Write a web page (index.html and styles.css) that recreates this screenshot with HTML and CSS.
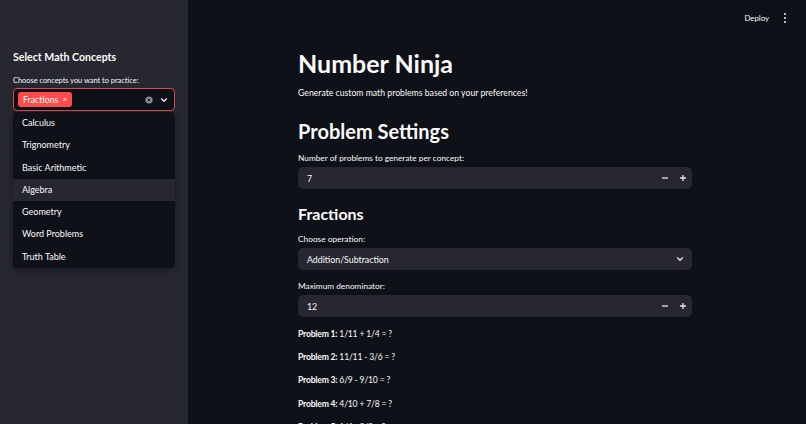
FILE: index.html
```html
<!DOCTYPE html>
<html lang="en">
<head>
<meta charset="utf-8">
<title>Number Ninja</title>
<link rel="stylesheet" href="styles.css">
</head>
<body>
<div class="app">
  <aside class="sidebar">
    <h3 class="side-title">Select Math Concepts</h3>
    <div class="side-label">Choose concepts you want to practice:</div>
    <div class="multiselect">
      <div class="ms-box">
        <span class="tag">Fractions <span class="tag-x">×</span></span>
        <span class="ms-icons">
          <svg class="clear-ico" width="8" height="8" viewBox="0 0 8 8"><circle cx="4" cy="4" r="3.6" fill="#8e9098"/><path d="M2.6 2.6 L5.4 5.4 M5.4 2.6 L2.6 5.4" stroke="#1a1c23" stroke-width="1"/></svg>
          <svg class="chev" width="8" height="6" viewBox="0 0 8 6"><path d="M1.2 1.5 L4 4.3 L6.8 1.5" fill="none" stroke="#e6e6e8" stroke-width="1.4"/></svg>
        </span>
      </div>
      <ul class="menu">
        <li>Calculus</li>
        <li>Trignometry</li>
        <li>Basic Arithmetic</li>
        <li class="hl">Algebra</li>
        <li>Geometry</li>
        <li>Word Problems</li>
        <li>Truth Table</li>
      </ul>
    </div>
  </aside>
  <main class="main">
    <header class="topbar">
      <span class="deploy">Deploy</span>
      <svg class="kebab" width="4" height="12" viewBox="0 0 4 12"><circle cx="2" cy="2" r="1.1" fill="#e6e6e8"/><circle cx="2" cy="6" r="1.1" fill="#e6e6e8"/><circle cx="2" cy="10" r="1.1" fill="#e6e6e8"/></svg>
    </header>
    <section class="content">
      <h1 class="title">Number Ninja</h1>
      <p class="subtitle">Generate custom math problems based on your preferences!</p>
      <h2 class="h2">Problem Settings</h2>
      <div class="label">Number of problems to generate per concept:</div>
      <div class="input">
        <span class="val">7</span>
        <span class="steps">
          <svg width="8" height="8" viewBox="0 0 8 8"><path d="M1 4 H7" stroke="#e6e6e8" stroke-width="1.3"/></svg>
          <svg width="8" height="8" viewBox="0 0 8 8"><path d="M1 4 H7 M4 1 V7" stroke="#e6e6e8" stroke-width="1.3"/></svg>
        </span>
      </div>
      <h3 class="h3">Fractions</h3>
      <div class="label">Choose operation:</div>
      <div class="input">
        <span class="val">Addition/Subtraction</span>
        <svg class="sel-chev" width="8" height="6" viewBox="0 0 8 6"><path d="M1.2 1.5 L4 4.3 L6.8 1.5" fill="none" stroke="#e6e6e8" stroke-width="1.3"/></svg>
      </div>
      <div class="label label-gap">Maximum denominator:</div>
      <div class="input">
        <span class="val">12</span>
        <span class="steps">
          <svg width="8" height="8" viewBox="0 0 8 8"><path d="M1 4 H7" stroke="#e6e6e8" stroke-width="1.3"/></svg>
          <svg width="8" height="8" viewBox="0 0 8 8"><path d="M1 4 H7 M4 1 V7" stroke="#e6e6e8" stroke-width="1.3"/></svg>
        </span>
      </div>
      <div class="problems">
        <p class="prob"><b>Problem 1:</b> 1/11 + 1/4 = ?</p>
        <p class="prob"><b>Problem 2:</b> 11/11 - 3/6 = ?</p>
        <p class="prob"><b>Problem 3:</b> 6/9 - 9/10 = ?</p>
        <p class="prob"><b>Problem 4:</b> 4/10 + 7/8 = ?</p>
        <p class="prob"><b>Problem 5:</b> 1/4 - 2/3 = ?</p>
      </div>
    </section>
  </main>
</div>
</body>
</html>
```
FILE: styles.css
```css
* { box-sizing: border-box; }
html, body {
  margin: 0;
  padding: 0;
  height: 424px;
  overflow: hidden;
  background: #0e1117;
  color: #fafafa;
  font-family: "Lato", "Noto Sans", sans-serif;
}
.app {
  display: flex;
  height: 424px;
}
.sidebar {
  width: 188px;
  flex: none;
  background: #262730;
  padding: 50px 13px 0 13px;
}
.side-title {
  margin: 0;
  font-size: 10.6px;
  line-height: 14px;
  font-weight: 700;
  color: #fafafa;
}
.side-label {
  margin-top: 12px;
  font-size: 7.4px;
  line-height: 10px;
  color: #fafafa;
}
.multiselect {
  position: relative;
  margin-top: 2px;
}
.ms-box {
  height: 23px;
  border: 1px solid #d8474b;
  border-radius: 4px;
  background: #0e1117;
  display: flex;
  align-items: center;
  justify-content: space-between;
  padding: 0 6px 0 4px;
}
.tag {
  background: #ff4b4b;
  color: #fff;
  font-size: 8.8px;
  line-height: 15px;
  height: 15px;
  padding: 0 5px 0 5px;
  border-radius: 3px;
  display: inline-flex;
  align-items: center;
  gap: 4px;
}
.tag-x { font-size: 8px; }
.ms-icons {
  display: flex;
  align-items: center;
  gap: 7px;
}
.menu {
  position: absolute;
  left: 0;
  right: 0;
  top: 24px;
  margin: 0;
  padding: 0;
  list-style: none;
  background: #0e1117;
  border-radius: 4px;
  box-shadow: 0 2px 6px rgba(0,0,0,0.35);
  overflow: hidden;
}
.menu li {
  height: 22.3px;
  line-height: 22.3px;
  padding-left: 9px;
  font-size: 9px;
  color: #fafafa;
}
.menu li.hl { background: #262730; }

.main {
  flex: 1;
  display: flex;
  flex-direction: column;
  min-height: 0;
}
.topbar {
  flex: none;
  height: 35px;
  display: flex;
  align-items: center;
  justify-content: flex-end;
  gap: 14px;
  padding-right: 19px;
}
.deploy {
  font-size: 7.8px;
  color: #fafafa;
}
.content {
  flex: none;
  padding-left: 110px;
  width: 504px;
}
.title {
  margin: 13px 0 0;
  font-size: 25px;
  line-height: 30px;
  font-weight: 700;
}
.subtitle {
  margin: 8px 0 0;
  font-size: 8.7px;
  line-height: 14px;
}
.h2 {
  margin: 19px 0 0;
  font-size: 20px;
  line-height: 24px;
  font-weight: 700;
}
.label {
  margin-top: 9px;
  font-size: 8.3px;
  line-height: 12px;
}
.label-gap { margin-top: 10px; }
.input {
  margin-top: 3px;
  height: 22px;
  background: #262730;
  border-radius: 5px;
  display: flex;
  align-items: center;
  justify-content: space-between;
  padding: 0 5px 0 9px;
  font-size: 8.8px;
}
.steps {
  display: flex;
  gap: 10px;
}
.sel-chev { margin-right: 3px; }
.h3 {
  margin: 15px 0 0;
  font-size: 16px;
  line-height: 20px;
  font-weight: 700;
}
.problems {
  margin-top: 10px;
  display: flex;
  flex-direction: column;
  gap: 9.2px;
}
.prob {
  margin: 0;
  font-size: 8.6px;
  line-height: 14px;
  letter-spacing: -0.2px;
}
.prob b { font-weight: 700; }
```
